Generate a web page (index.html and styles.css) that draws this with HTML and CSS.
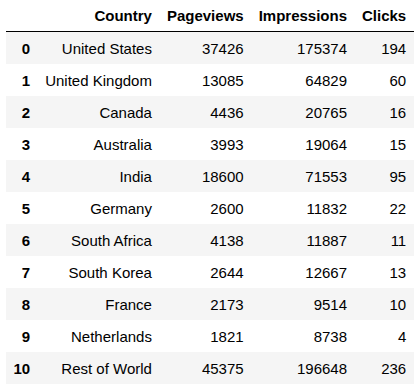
FILE: index.html
```html
<!DOCTYPE html>
<html>
<head>
<meta charset="utf-8">
<link rel="stylesheet" href="styles.css">
</head>
<body>
<table class="dataframe">
<thead>
<tr><th></th><th>Country</th><th>Pageviews</th><th>Impressions</th><th>Clicks</th></tr>
</thead>
<tbody>
<tr><th>0</th><td>United States</td><td>37426</td><td>175374</td><td>194</td></tr>
<tr><th>1</th><td>United Kingdom</td><td>13085</td><td>64829</td><td>60</td></tr>
<tr><th>2</th><td>Canada</td><td>4436</td><td>20765</td><td>16</td></tr>
<tr><th>3</th><td>Australia</td><td>3993</td><td>19064</td><td>15</td></tr>
<tr><th>4</th><td>India</td><td>18600</td><td>71553</td><td>95</td></tr>
<tr><th>5</th><td>Germany</td><td>2600</td><td>11832</td><td>22</td></tr>
<tr><th>6</th><td>South Africa</td><td>4138</td><td>11887</td><td>11</td></tr>
<tr><th>7</th><td>South Korea</td><td>2644</td><td>12667</td><td>13</td></tr>
<tr><th>8</th><td>France</td><td>2173</td><td>9514</td><td>10</td></tr>
<tr><th>9</th><td>Netherlands</td><td>1821</td><td>8738</td><td>4</td></tr>
<tr><th>10</th><td>Rest of World</td><td>45375</td><td>196648</td><td>236</td></tr>
</tbody>
</table>
</body>
</html>
```
FILE: styles.css
```css
html, body {
  margin: 0;
  padding: 0;
  background: #ffffff;
}
body {
  font-family: "Liberation Sans", Arial, sans-serif;
  font-size: 15px;
  color: #000000;
}
.dataframe {
  margin-left: 6px;
  border-collapse: collapse;
  border-spacing: 0;
  border: none;
}
.dataframe th,
.dataframe td {
  text-align: right;
  vertical-align: middle;
  padding: 0 7.5px;
  height: 32px;
  line-height: normal;
  white-space: nowrap;
}
.dataframe th {
  font-weight: bold;
}
.dataframe thead tr {
  border-bottom: 1px solid #000000;
}
.dataframe thead th {
  height: 31px;
}
.dataframe tbody tr:nth-child(odd) {
  background: #f5f5f5;
}
```
